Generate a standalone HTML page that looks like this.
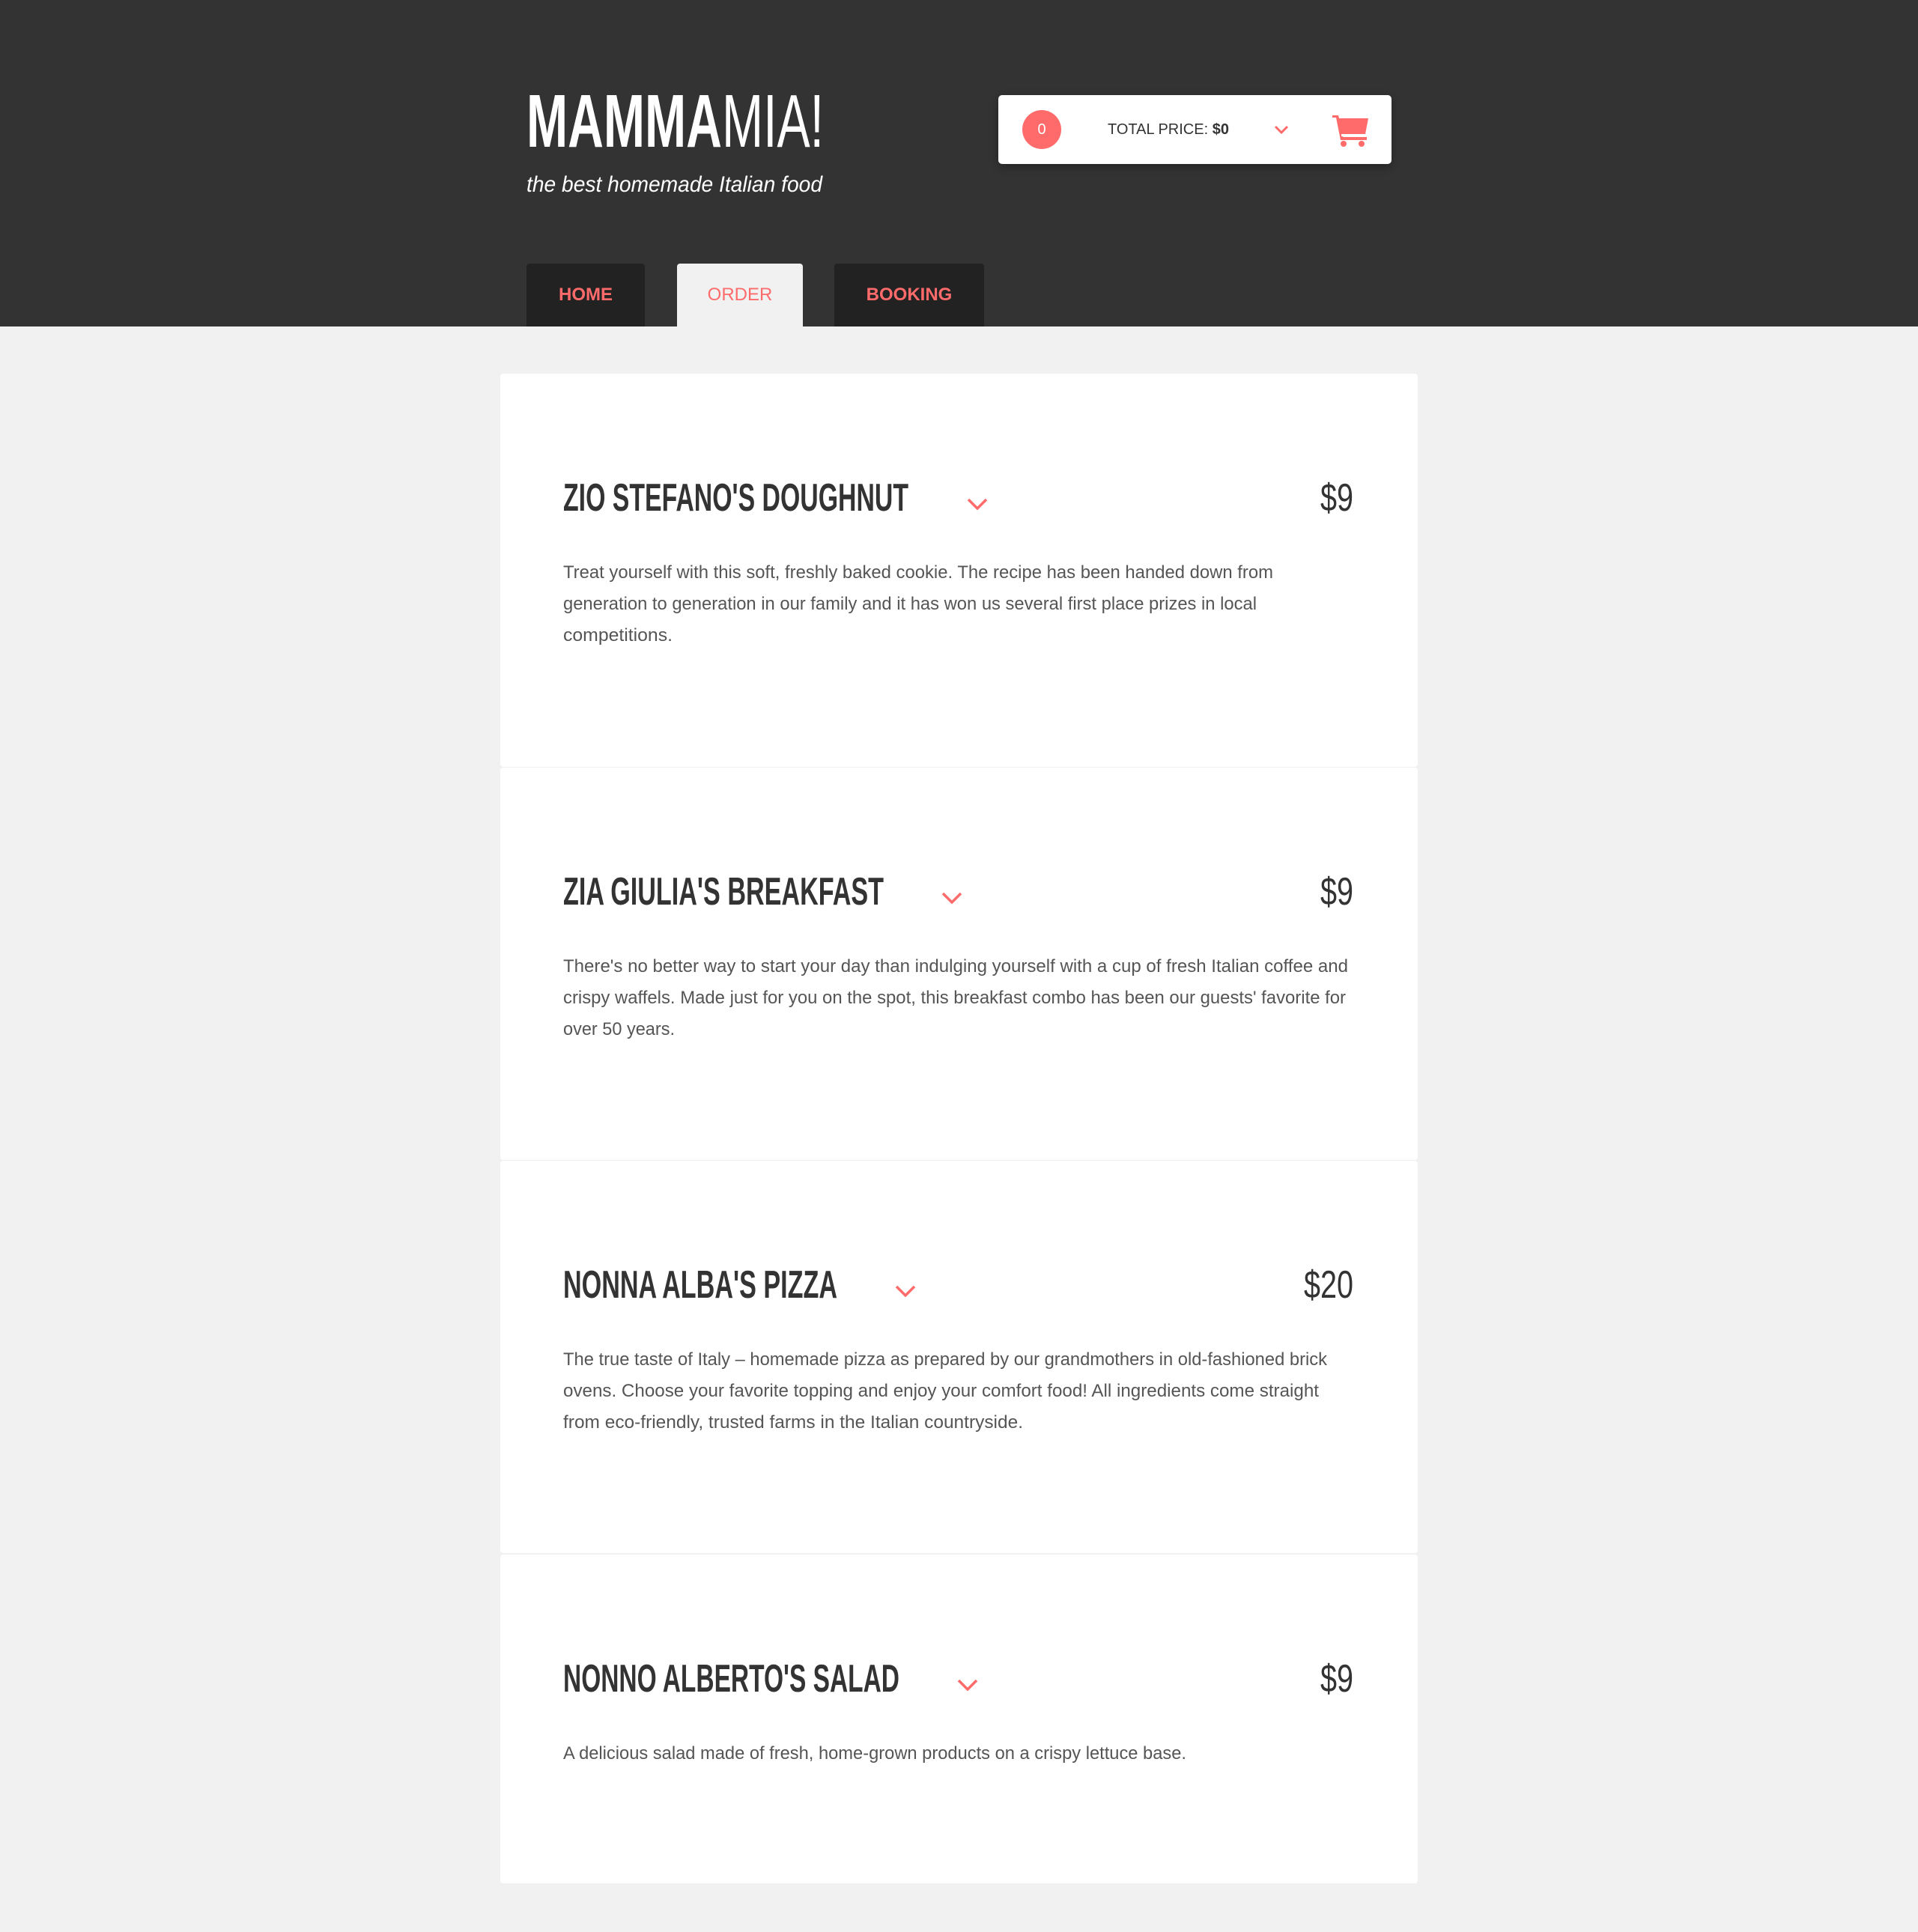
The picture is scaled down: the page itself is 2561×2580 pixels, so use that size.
<!DOCTYPE html>
<html><head><meta charset="utf-8">
<style>
*{margin:0;padding:0;box-sizing:border-box}
html,body{width:2561px;height:2580px;background:#f1f1f1;font-family:"Liberation Sans",sans-serif;overflow:hidden}
.abs{position:absolute;white-space:nowrap}
.fit{display:inline-block;transform-origin:left top}
#hdr{position:absolute;left:0;top:0;width:2561px;height:436px;background:#333}
.tab{position:absolute;top:352px;height:84px;background:#222;color:#ff6b6b;font-weight:bold;font-size:24px;text-align:center;line-height:84px;border-radius:4px 4px 0 0}
.card{position:absolute;left:668px;width:1225px;background:#fff;border-radius:4px}
.title{position:absolute;left:84px;color:#333;font-weight:bold;font-size:52px;line-height:52px}
.price{position:absolute;right:86px;color:#333;font-size:52px;line-height:52px;font-family:"Liberation Sans Narrow","Liberation Sans",sans-serif}
.chev{position:absolute}
.desc{position:absolute;left:84px;color:#555;font-size:24px;line-height:42px}
</style></head><body>
<div id="hdr"></div>
<div class="abs" style="left:703px;top:112px;color:#fff;font-size:100px;line-height:100px"><span class="fit" style="--w:397px"><b>MAMMA</b>MIA!</span></div>
<div class="abs" style="left:703px;top:229px;color:#fff;font-size:30px;line-height:36px;font-style:italic"><span class="fit" style="--w:395px">the best homemade Italian food</span></div>
<div class="abs" style="left:1333px;top:127px;width:525px;height:92px;background:#fff;border-radius:5px;box-shadow:0 4px 12px rgba(0,0,0,.3)">
 <div class="abs" style="left:32px;top:20px;width:52px;height:52px;border-radius:50%;background:#ff6b6b;color:#fff;font-size:20px;line-height:52px;text-align:center">0</div>
 <div class="abs" style="left:146px;top:34px;color:#333;font-size:20px;line-height:24px"><span class="fit" style="--w:162px">TOTAL PRICE: <b>$0</b></span></div>
 <svg class="abs" style="left:368px;top:40px" width="20" height="14" viewBox="0 0 20 14"><path d="M2 2l8 8 8-8" fill="none" stroke="#ff6b6b" stroke-width="3"/></svg>
 <svg class="abs" style="left:446px;top:25px" width="50" height="44" viewBox="0 0 50 44"><path d="M0 2h8l1 4h39l-4 21H13l1 4h32v4H11L5 5H0z" fill="#ff6b6b"/><rect x="12" y="27" width="32" height="3" fill="#fff"/><circle cx="15" cy="40" r="4" fill="#ff6b6b"/><circle cx="39" cy="40" r="4" fill="#ff6b6b"/></svg>
</div>
<div class="tab" style="left:703px;width:158px">HOME</div>
<div class="tab" style="left:904px;width:168px;background:#f1f1f1;font-weight:normal">ORDER</div>
<div class="tab" style="left:1114px;width:200px">BOOKING</div>

<div class="card" style="top:499px;height:525px">
 <div class="title" style="top:140px"><span class="fit" style="--w:461px">ZIO STEFANO'S DOUGHNUT</span></div>
 <svg class="chev" style="left:623px;top:166px" width="28" height="16" viewBox="0 0 28 16"><path d="M2 2l12 12 12-12" fill="none" stroke="#ff6b6b" stroke-width="3.5"/></svg>
 <div class="price" style="top:140px"><span class="fit" style="--w:44px">$9</span></div>
 <div class="desc" style="top:245px"><span class="fit" style="--w:948px">Treat yourself with this soft, freshly baked cookie. The recipe has been handed down from</span><br><span class="fit" style="--w:926px">generation to generation in our family and it has won us several first place prizes in local</span><br><span class="fit" style="--w:146px">competitions.</span></div>
</div>
<div class="card" style="top:1025px;height:524px">
 <div class="title" style="top:140px"><span class="fit" style="--w:428px">ZIA GIULIA'S BREAKFAST</span></div>
 <svg class="chev" style="left:589px;top:166px" width="28" height="16" viewBox="0 0 28 16"><path d="M2 2l12 12 12-12" fill="none" stroke="#ff6b6b" stroke-width="3.5"/></svg>
 <div class="price" style="top:140px"><span class="fit" style="--w:44px">$9</span></div>
 <div class="desc" style="top:245px"><span class="fit" style="--w:1048px">There's no better way to start your day than indulging yourself with a cup of fresh Italian coffee and</span><br><span class="fit" style="--w:1045px">crispy waffels. Made just for you on the spot, this breakfast combo has been our guests' favorite for</span><br><span class="fit" style="--w:149px">over 50 years.</span></div>
</div>
<div class="card" style="top:1550px;height:524px">
 <div class="title" style="top:140px"><span class="fit" style="--w:366px">NONNA ALBA'S PIZZA</span></div>
 <svg class="chev" style="left:527px;top:166px" width="28" height="16" viewBox="0 0 28 16"><path d="M2 2l12 12 12-12" fill="none" stroke="#ff6b6b" stroke-width="3.5"/></svg>
 <div class="price" style="top:140px"><span class="fit" style="--w:66px">$20</span></div>
 <div class="desc" style="top:245px"><span class="fit" style="--w:1020px">The true taste of Italy – homemade pizza as prepared by our grandmothers in old-fashioned brick</span><br><span class="fit" style="--w:1009px">ovens. Choose your favorite topping and enjoy your comfort food! All ingredients come straight</span><br><span class="fit" style="--w:614px">from eco-friendly, trusted farms in the Italian countryside.</span></div>
</div>
<div class="card" style="top:2076px;height:439px">
 <div class="title" style="top:140px"><span class="fit" style="--w:449px">NONNO ALBERTO'S SALAD</span></div>
 <svg class="chev" style="left:610px;top:166px" width="28" height="16" viewBox="0 0 28 16"><path d="M2 2l12 12 12-12" fill="none" stroke="#ff6b6b" stroke-width="3.5"/></svg>
 <div class="price" style="top:140px"><span class="fit" style="--w:44px">$9</span></div>
 <div class="desc" style="top:245px"><span class="fit" style="--w:832px">A delicious salad made of fresh, home-grown products on a crispy lettuce base.</span></div>
</div>
<script>
document.querySelectorAll('.fit').forEach(function(e){
 var w=parseFloat(getComputedStyle(e).getPropertyValue('--w'));
 var r=e.getBoundingClientRect().width;
 if(w&&r)e.style.transform='scaleX('+(w/r)+')';
});
document.querySelectorAll('.price .fit').forEach(function(e){e.style.transform='none';var w=parseFloat(getComputedStyle(e).getPropertyValue('--w'));var r=e.getBoundingClientRect().width;e.parentNode.style.width=w+'px';e.style.transform='scaleX('+(w/r)+')';});
</script>
</body></html>
